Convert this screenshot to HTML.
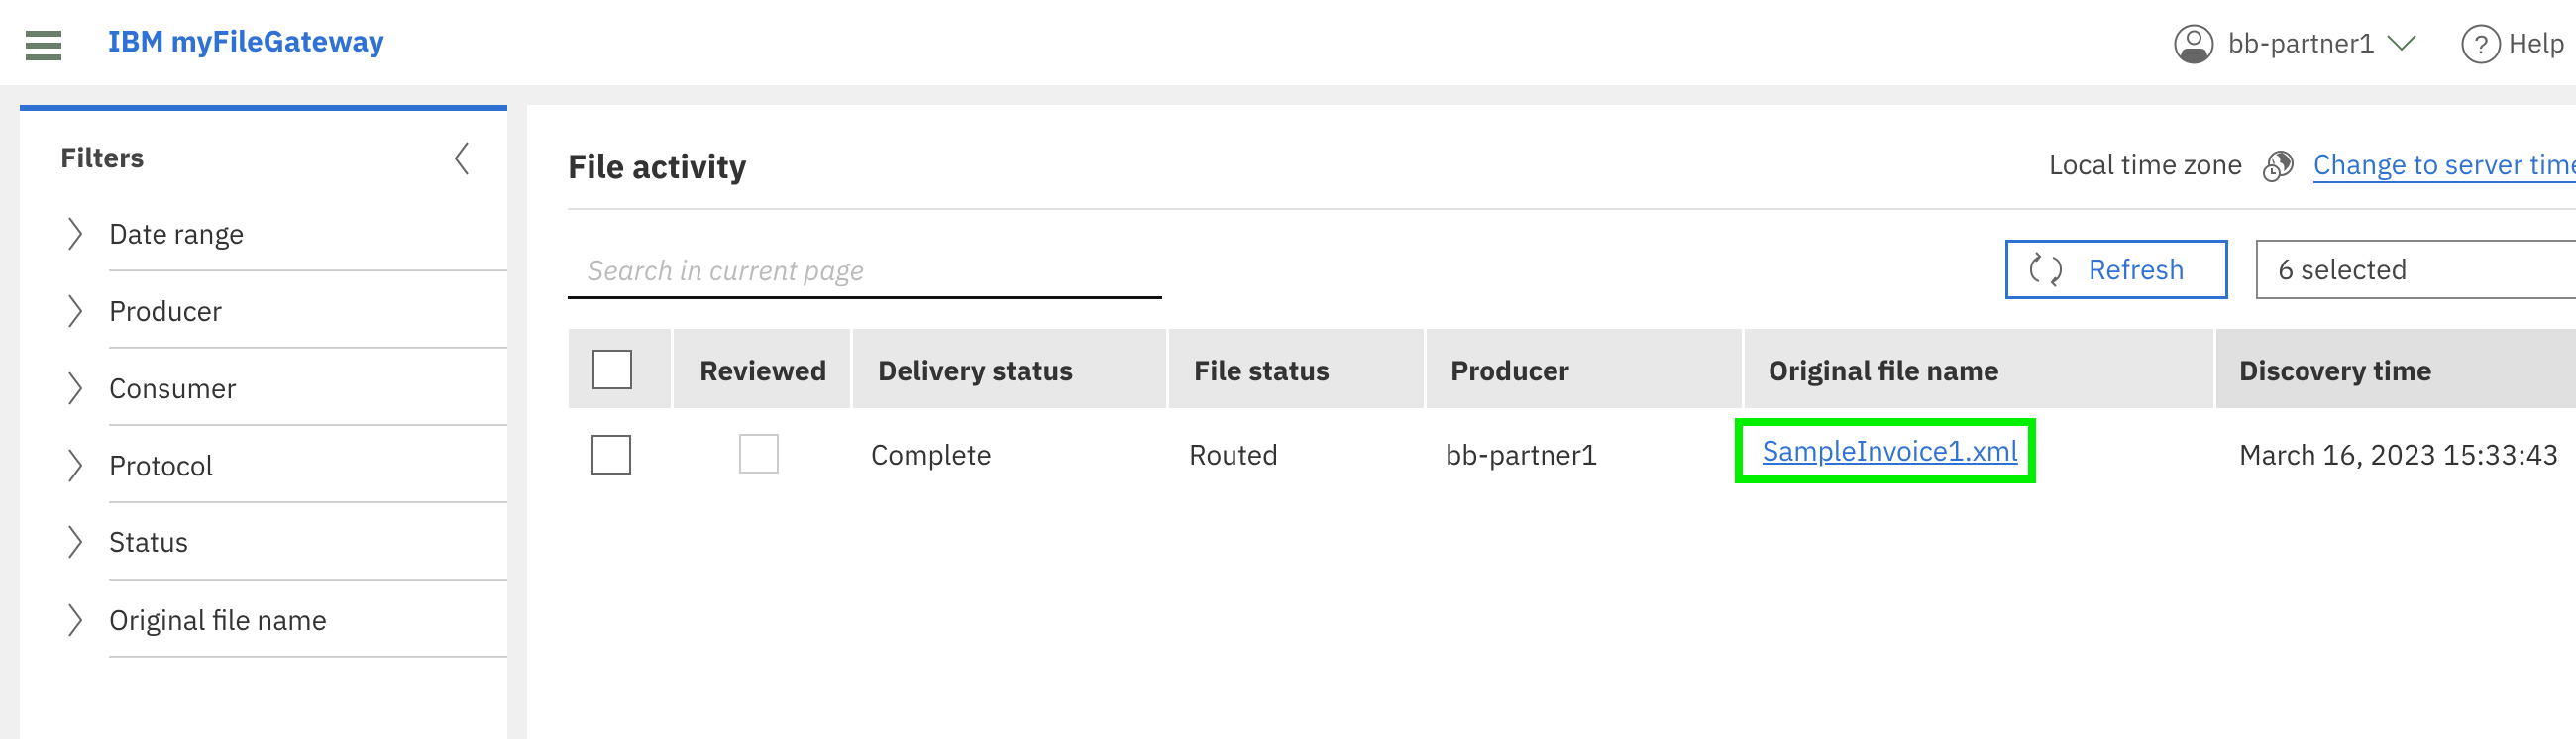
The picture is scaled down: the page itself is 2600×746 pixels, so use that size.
<!DOCTYPE html>
<html><head><meta charset="utf-8"><style>
*{margin:0;padding:0;box-sizing:border-box}
body{width:2600px;height:738px;overflow:hidden;background:#f0f0f0;font-family:"IBM Plex Sans","Liberation Sans",sans-serif;color:#333;position:relative}
.a{position:absolute;white-space:nowrap}
.t{font-size:28px;line-height:40px;height:40px}
.b{font-weight:bold}
.hdr{left:0;top:0;width:2600px;height:86px;background:#fff}
.bar{position:absolute;left:26px;width:36px;height:6px;background:#6a7f68}
.div{position:absolute;left:110px;width:402px;height:2px;background:#d0d0d0}
.chev{position:absolute;left:66px;width:22px;height:40px}
.th{position:absolute;top:332px;height:80px;background:#e8e8e8}
.cb{position:absolute;width:40px;height:40px;border:2px solid #666;background:#fff}
</style></head><body>
<div class="a hdr"></div>
<div class="bar" style="top:31px"></div><div class="bar" style="top:43px"></div><div class="bar" style="top:55px"></div>
<div class="a t b" style="left:109px;top:22px;font-size:29.5px;color:#2f72d3">IBM myFileGateway</div>

<svg class="a" style="left:2194px;top:24px" width="41" height="41" viewBox="0 0 41 41"><circle cx="20.5" cy="20.5" r="19" fill="none" stroke="#666" stroke-width="2"/><circle cx="20.5" cy="14" r="6.5" fill="none" stroke="#666" stroke-width="2"/><path d="M7 33 Q8 25 14 25 H27 Q33 25 34 33 Q28 40 20.5 40 Q12 40 7 33Z" fill="#666"/></svg>
<div class="a t" style="left:2249px;top:24px;font-size:27px;color:#555">bb-partner1</div>
<svg class="a" style="left:2408px;top:32px" width="32" height="22"><path d="M2 4 L16 18 L30 4" fill="none" stroke="#5a7a5a" stroke-width="2"/></svg>
<svg class="a" style="left:2484px;top:24px" width="41" height="41" viewBox="0 0 41 41"><circle cx="20.5" cy="20.5" r="19" fill="none" stroke="#666" stroke-width="2"/><text x="20.5" y="30" text-anchor="middle" font-family="Liberation Sans" font-size="26" fill="#666">?</text></svg>
<div class="a t" style="left:2532px;top:24px;font-size:27px;color:#555">Help</div>

<!-- sidebar -->
<div class="a" style="left:20px;top:106px;width:492px;height:640px;background:#fff;border-top:6px solid #2f72d3"></div>
<div class="a t b" style="left:61px;top:139px;color:#444">Filters</div>
<svg class="a" style="left:456px;top:142px" width="20" height="36"><path d="M16 2 L4 18 L16 34" fill="none" stroke="#666" stroke-width="2"/></svg>

<svg class="chev" style="top:216px"><path d="M4 4 L16 20 L4 36" fill="none" stroke="#666" stroke-width="2"/></svg>
<div class="a t" style="left:110px;top:216px">Date range</div><div class="div" style="top:272px"></div>
<svg class="chev" style="top:294px"><path d="M4 4 L16 20 L4 36" fill="none" stroke="#666" stroke-width="2"/></svg>
<div class="a t" style="left:110px;top:294px">Producer</div><div class="div" style="top:350px"></div>
<svg class="chev" style="top:372px"><path d="M4 4 L16 20 L4 36" fill="none" stroke="#666" stroke-width="2"/></svg>
<div class="a t" style="left:110px;top:372px">Consumer</div><div class="div" style="top:428px"></div>
<svg class="chev" style="top:450px"><path d="M4 4 L16 20 L4 36" fill="none" stroke="#666" stroke-width="2"/></svg>
<div class="a t" style="left:110px;top:450px">Protocol</div><div class="div" style="top:506px"></div>
<svg class="chev" style="top:527px"><path d="M4 4 L16 20 L4 36" fill="none" stroke="#666" stroke-width="2"/></svg>
<div class="a t" style="left:110px;top:527px">Status</div><div class="div" style="top:584px"></div>
<svg class="chev" style="top:606px"><path d="M4 4 L16 20 L4 36" fill="none" stroke="#666" stroke-width="2"/></svg>
<div class="a t" style="left:110px;top:606px">Original file name</div><div class="div" style="top:662px"></div>

<!-- main -->
<div class="a" style="left:532px;top:106px;width:2068px;height:640px;background:#fff"></div>
<div class="a b" style="left:573px;top:146px;font-size:33px;line-height:46px;color:#333">File activity</div>
<div class="a" style="left:573px;top:210px;width:2027px;height:2px;background:#e0e0e0"></div>
<div class="a t" style="left:2068px;top:146px;color:#444">Local time zone</div>
<svg class="a" style="left:2283px;top:151px" width="34" height="34" viewBox="0 0 34 34"><circle cx="19" cy="14" r="12" fill="none" stroke="#666" stroke-width="2"/><path d="M14 5 Q20 8 18 13 Q24 14 22 22 Q28 18 29 12 Q26 6 20 3Z M10 9 Q14 12 12 16Z" fill="#666"/><circle cx="10" cy="24" r="8" fill="#fff" stroke="#666" stroke-width="2"/><path d="M10 19 V24 H14" fill="none" stroke="#666" stroke-width="2"/></svg>
<div class="a t" style="left:2335px;top:146px;color:#2f72d3;border-bottom:2px solid #2f72d3;height:39px">Change to server time</div>

<div class="a t" style="left:593px;top:253px;color:#bbb;font-style:italic">Search in current page</div>
<div class="a" style="left:573px;top:299px;width:600px;height:3px;background:#111"></div>

<div class="a" style="left:2024px;top:242px;width:225px;height:60px;border:3px solid #2f72d3;background:#fff"></div>
<svg class="a" style="left:2047px;top:253px" width="36" height="38" viewBox="0 0 36 38"><path d="M12 6 Q3 10 3 19 Q3 28 11 31 M8 2 L12 6 L8 11" fill="none" stroke="#666" stroke-width="2"/><path d="M24 32 Q33 28 33 19 Q33 10 25 7 M28 36 L24 32 L28 27" fill="none" stroke="#666" stroke-width="2"/></svg>
<div class="a t" style="left:2108px;top:252px;color:#2f72d3">Refresh</div>
<div class="a" style="left:2277px;top:242px;width:340px;height:60px;border:2px solid #888;background:#fff"></div>
<div class="a t" style="left:2299px;top:252px;color:#444">6 selected</div>

<!-- table header -->
<div class="th" style="left:574px;width:103px"></div>
<div class="th" style="left:680px;width:178px"></div>
<div class="th" style="left:861px;width:316px"></div>
<div class="th" style="left:1180px;width:257px"></div>
<div class="th" style="left:1440px;width:318px"></div>
<div class="th" style="left:1761px;width:473px"></div>
<div class="th" style="left:2237px;width:363px;background:#e0e0e0"></div>
<div class="cb" style="left:598px;top:353px"></div>
<div class="a t b" style="left:706px;top:354px">Reviewed</div>
<div class="a t b" style="left:886px;top:354px">Delivery status</div>
<div class="a t b" style="left:1205px;top:354px">File status</div>
<div class="a t b" style="left:1464px;top:354px">Producer</div>
<div class="a t b" style="left:1785px;top:354px">Original file name</div>
<div class="a t b" style="left:2260px;top:354px">Discovery time</div>

<!-- row -->
<div class="cb" style="left:597px;top:439px"></div>
<div class="cb" style="left:746px;top:438px;border-color:#ccc"></div>
<div class="a t" style="left:879px;top:439px">Complete</div>
<div class="a t" style="left:1200px;top:439px">Routed</div>
<div class="a t" style="left:1459px;top:439px">bb-partner1</div>
<div class="a" style="left:1751px;top:422px;width:304px;height:66px;border:8px solid #00f000"></div>
<div class="a t" style="left:1779px;top:435px;color:#2f72d3;text-decoration:underline">SampleInvoice1.xml</div>
<div class="a t" style="left:2260px;top:439px">March 16, 2023 15:33:43</div>
</body></html>
